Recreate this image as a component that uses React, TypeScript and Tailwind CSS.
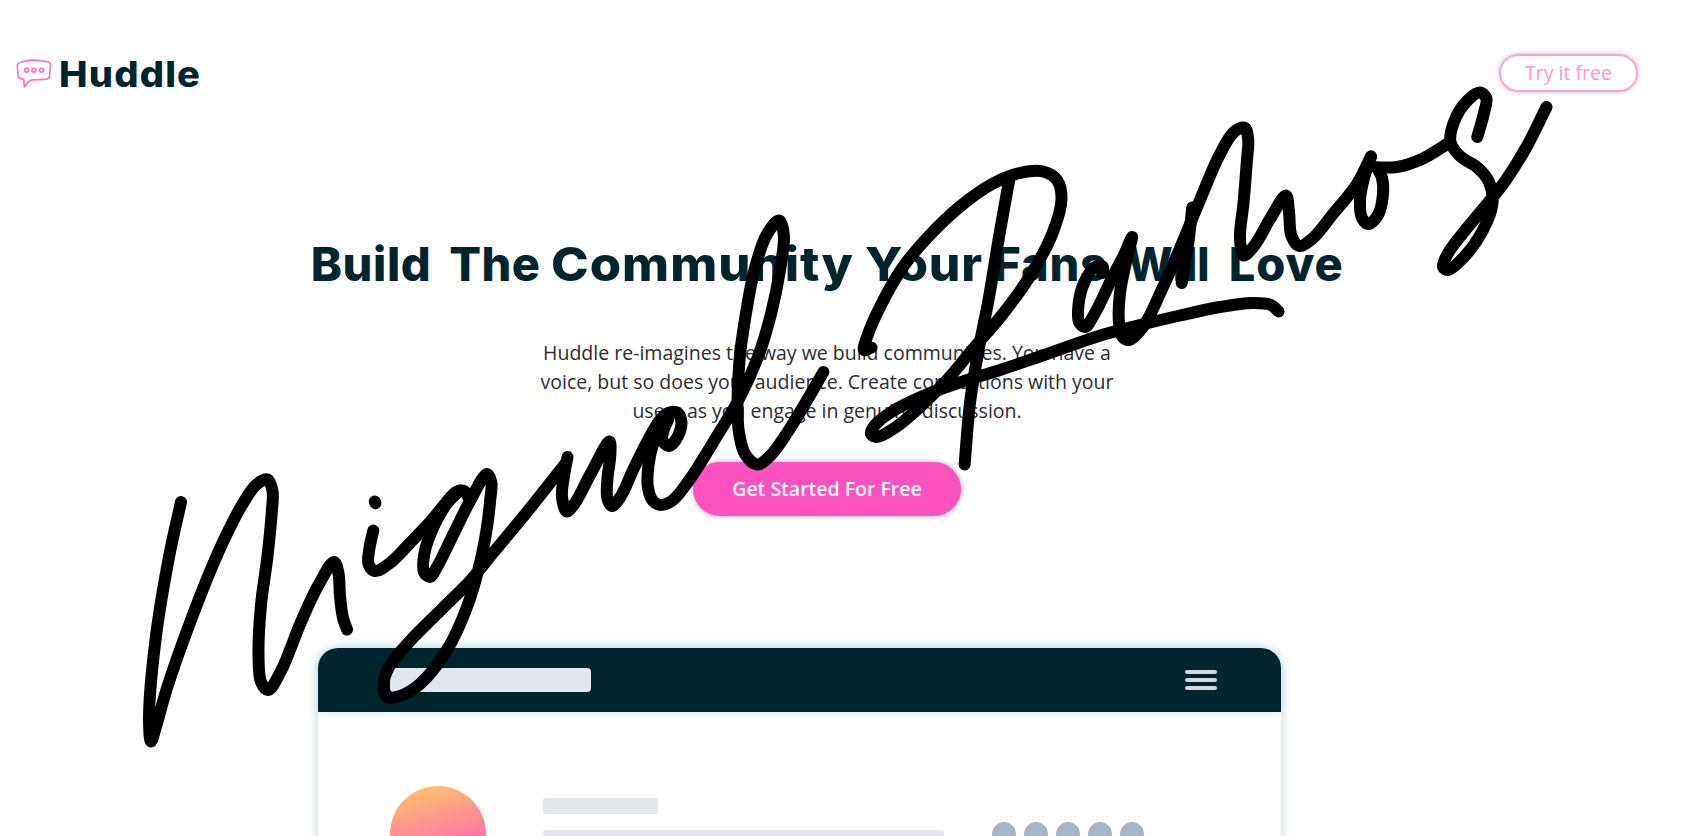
type Point = [number, number];

/** Centripetal curve through the points of one pen stroke, as a cubic path. */
function smooth(points: Point[]): string {
  const n = points.length;
  const lens = points.slice(1).map((p, i) => Math.sqrt(Math.hypot(p[0] - points[i][0], p[1] - points[i][1])) || 1);
  const tangents: Point[] = points.map((p, i) => {
    if (i === 0) return [(points[1][0] - p[0]) / lens[0], (points[1][1] - p[1]) / lens[0]];
    if (i === n - 1) {
      const l = lens[n - 2];
      return [(p[0] - points[n - 2][0]) / l, (p[1] - points[n - 2][1]) / l];
    }
    const a = lens[i - 1];
    const b = lens[i];
    return [0, 1].map(
      (k) => (((p[k] - points[i - 1][k]) / a) * b + ((points[i + 1][k] - p[k]) / b) * a) / (a + b),
    ) as Point;
  });
  let d = `M${points[0][0]} ${points[0][1]}`;
  for (let i = 0; i < n - 1; i++) {
    const h = lens[i] / 3;
    const [p, q, s, t] = [points[i], points[i + 1], tangents[i], tangents[i + 1]];
    d += `C${(p[0] + s[0] * h).toFixed(1)} ${(p[1] + s[1] * h).toFixed(1)} ${(q[0] - t[0] * h).toFixed(1)} ${(q[1] - t[1] * h).toFixed(1)} ${q[0]} ${q[1]}`;
  }
  return d;
}

const strokes: Point[][] = [
  [[181, 502], [169, 557], [155.5, 640], [149, 720], [151, 741.5], [157, 723], [167, 688], [191, 620], [218, 553], [242, 505], [256, 485], [267.5, 479.5], [272.5, 491], [271.8, 512], [267.5, 556], [261, 605], [258.5, 653], [261, 682], [268, 690], [281, 671], [301, 622], [319, 584], [334, 562], [338.3, 572], [340, 596], [343, 618], [347, 629.5]],
  [[374.8, 501.5], [375.4, 503.2]],
  [[373.3, 530.5], [369.5, 548], [368.5, 564], [375, 571], [390, 563], [410, 543], [430, 522], [445, 504], [456, 492], [464, 491], [469, 498]],
  [[460, 490.5], [448, 502], [433, 528], [424.5, 553], [424, 572], [430, 577], [437, 567], [453, 535], [470, 501], [487, 474], [491.3, 482], [490.2, 500], [487, 527], [480, 563], [467, 607], [447, 650], [420, 684], [400, 696], [387, 697], [383.5, 685], [389, 667], [410, 641], [443, 608], [470, 581], [493, 553], [527, 512], [558, 473], [566, 463]],
  [[567.5, 457], [564, 476], [562, 497], [566.5, 511.5], [575, 503], [590, 475], [609.5, 441.5], [610.3, 455], [607.5, 478], [607.3, 498], [612, 506], [621, 496], [633, 470], [647, 442], [660, 420], [668, 413], [677, 412.5], [681.3, 421], [678, 436], [669, 446], [662.5, 440.5], [664, 429], [668, 420]],
  [[661, 424], [654, 441], [648.5, 465], [648, 488], [653, 501], [661, 505], [673, 500], [690, 479], [703, 459], [717, 436], [738, 401], [758, 357], [771, 314], [780, 270], [783.8, 235], [779, 220.5], [766, 236], [754, 272], [746, 313], [739.5, 360], [737.5, 407], [739, 433], [745, 454], [757, 464.5], [770, 456], [787, 433], [806, 402], [823.4, 372]],
  [[871.5, 347.5], [864, 350], [867, 337], [881, 305], [903, 267], [928, 237], [960, 206.5], [993, 183.5], [1020, 173], [1043, 171.5], [1057, 180], [1061.5, 199], [1053, 232], [1030, 276], [1002, 315], [973, 349], [947, 380], [920, 407], [896, 427], [877, 437], [871, 434], [875, 425], [893, 411], [923, 396], [958, 383], [1000, 370], [1044, 355], [1102, 335], [1140, 325], [1180, 315.5], [1220, 307], [1252, 303], [1271, 305], [1278.5, 311.5]],
  [[1009, 181], [999, 237], [988.5, 300], [978, 353], [970, 403], [964.6, 464.5]],
  [[1102, 273], [1103, 267], [1095, 267], [1084, 283], [1078.5, 305], [1079, 322], [1085, 327], [1095, 313], [1113, 276], [1124, 255], [1132, 237], [1126, 262], [1120, 293], [1119, 323], [1122, 336], [1129, 340], [1143, 327], [1163, 287], [1183, 241], [1200, 200], [1219, 156], [1234, 132], [1245, 128], [1248.2, 140], [1246.7, 163], [1243.5, 203], [1240, 238], [1243.5, 255.5], [1254, 246], [1270, 219], [1286, 195.5], [1289, 212], [1291.5, 236], [1299, 246], [1312, 239], [1333, 214], [1357, 184], [1371, 156.5]],
  [[1192.3, 207.5], [1188, 245], [1181.7, 283]],
  [[1371, 156.5], [1364, 178], [1360, 200], [1362, 218], [1368.5, 224], [1378, 215], [1383, 194], [1382, 178], [1377, 167.5]],
  [[1377, 167.5], [1397, 167], [1422, 159], [1448, 143.5]],
  [[1477.3, 137], [1484, 113], [1486.3, 98], [1480, 92.5], [1467, 101], [1454, 122], [1450.5, 142], [1460, 156], [1478, 168], [1489, 182], [1492.5, 203], [1483, 230], [1464, 257], [1448, 270], [1443, 267], [1447, 255], [1463, 233], [1487, 204], [1506, 180], [1527, 146], [1546.5, 107]],
];

function Signature() {
  return (
    <svg
      className="pointer-events-none absolute left-0 top-0"
      width="1698"
      height="836"
      viewBox="0 0 1698 836"
      fill="none"
      stroke="#000"
      strokeWidth="12"
      strokeLinecap="round"
      strokeLinejoin="round"
      aria-label="Miguel Ramos"
    >
      {strokes.map((points, i) => (
        <path key={i} d={smooth(points)} />
      ))}
    </svg>
  );
}

function Logo() {
  return (
    <div className="flex items-center pt-[2px]">
      <svg width="36" height="30" viewBox="0 0 36 30" fill="none" stroke="#ff6fc8" strokeWidth="1.6" strokeLinejoin="round">
        <path d="M4.5 3.2C13 .8 23 .6 31.4 2.8c2.300.6 3.200 1.600 3 3.600l-.8 10.600c-.2 2.200-1.200 3.100-3.400 3.300-5 .4-9.500.6-13.700.6-2.400.1-3.400.8-4.400 2L8.300 28l-.5-7.900-2.600-.4c-2-.4-2.900-1.400-3.100-3.300L1.300 7c-.1-2.200.9-3.200 3.200-3.800Z" />
        <circle cx="10.6" cy="11.2" r="1.9" />
        <circle cx="17.9" cy="11.2" r="1.9" />
        <circle cx="25.5" cy="11.2" r="1.9" />
      </svg>
      <span className="ml-[7px] origin-left scale-x-[1.06] font-['Inter'] text-[36px] font-extrabold leading-[40px] tracking-[1.1px] text-[#00252e]">
        Huddle
      </span>
    </div>
  );
}

export default function App() {
  return (
    <div className="relative h-[836px] w-[1698px] overflow-hidden bg-white font-['Open_Sans',sans-serif]">
      <div className="flex w-[1654px] flex-col">
        <header className="flex h-[146px] items-center justify-between px-4">
          <Logo />
          <button className="h-[38px] w-[139px] rounded-full border-2 border-[#f3a6d6] text-[19.5px] leading-none text-[#f799d3] shadow-[0_0_5px_rgba(0,40,60,0.28)]">
            Try it free
          </button>
        </header>

        <section className="flex flex-col items-center pt-[82px] text-center">
          <h1 className="flex whitespace-pre text-left font-['Inter'] text-[47px] font-extrabold leading-[72px] text-[#00252e]">
            <span className="w-[138.5px] tracking-[0.6px]">Build </span>
            <span className="w-[102px] tracking-[0.4px]">The </span>
            <span className="w-[314px] origin-left scale-x-[1.08] tracking-[0.9px]">Community </span>
            <span className="w-[128px] origin-left scale-x-[1.06] tracking-[0.8px]">Your </span>
            <span className="w-[134px] tracking-[0.8px]">Fans </span>
            <span className="w-[101.5px] origin-left scale-x-[0.92]">Will </span>
            <span className="w-[114.5px] tracking-[0.9px]">Love</span>
          </h1>
          <p className="mt-[37.5px] whitespace-nowrap text-[19.5px] leading-[29.2px] text-[#2b2b30]">
            Huddle re-imagines the way we build communities. You have a
            <br />
            voice, but so does your audience. Create connections with your
            <br />
            users as you engage in genuine discussion.
          </p>
          <button className="mt-[36.8px] h-[54px] w-[268.5px] rounded-full bg-[#ff52bf] text-[19.5px] font-semibold text-white shadow-[0_0_5px_rgba(0,40,60,0.4)]">
            Get Started For Free
          </button>
        </section>

        <section className="ml-[317.5px] mt-[132px] h-[600px] w-[963.5px] rounded-[20px] bg-white shadow-[0_0_12px_rgba(20,120,150,0.26)]">
          <div className="flex h-[64px] items-center justify-between rounded-t-[20px] bg-[#00252e] pl-[72px] pr-[64px] shadow-[0_1px_8px_rgba(20,130,130,0.14)]">
            <div className="h-6 w-[201px] rounded-[4px] bg-[#e1e7ed]" />
            <div className="flex flex-col gap-1">
              <div className="h-1 w-8 rounded-full bg-[#d6dadc]" />
              <div className="h-1 w-8 rounded-full bg-[#d6dadc]" />
              <div className="h-1 w-8 rounded-full bg-[#d6dadc]" />
            </div>
          </div>
          <div className="flex items-start pl-[72px] pt-[74px]">
            <div className="size-[96.5px] rounded-full bg-[linear-gradient(165deg,#fbc36b_6%,#ff7ba2_58%,#ff52bf_100%)]" />
            <div className="ml-[56.5px] mt-[12.5px] flex flex-col gap-4">
              <div className="h-4 w-[115px] rounded-[3px] bg-[#e1e7eb]" />
              <div className="h-4 w-[401px] rounded-[3px] bg-[#e1e7eb]" />
            </div>
            <div className="ml-[48px] mt-9 flex gap-2">
              <div className="size-6 rounded-full bg-[#a5b6c8]" />
              <div className="size-6 rounded-full bg-[#a5b6c8]" />
              <div className="size-6 rounded-full bg-[#a5b6c8]" />
              <div className="size-6 rounded-full bg-[#a5b6c8]" />
              <div className="size-6 rounded-full bg-[#a5b6c8]" />
            </div>
          </div>
        </section>
      </div>
      <Signature />
    </div>
  );
}
